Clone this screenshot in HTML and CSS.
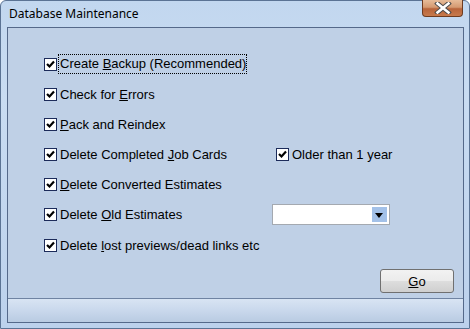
FILE: index.html
```html
<html>
<head>
<link rel="stylesheet" href="styles.css">
</head>
<body>
<div class="window">
    <div class="titlebar">
        <span class="title">Database Maintenance</span>
        <div class="close">
            <svg viewBox="0 0 24 12" width="24" height="12">
                <path d="M 6.5,1.5 L 17.5,10.5 M 17.5,1.5 L 6.5,10.5" stroke="#4a4a4a" stroke-width="4.6" stroke-linecap="square"/>
                <path d="M 6.5,1.5 L 17.5,10.5 M 17.5,1.5 L 6.5,10.5" stroke="#ffffff" stroke-width="2.6" stroke-linecap="square"/>
            </svg>
        </div>
    </div>
    <div class="client">
        <div class="content">
            <div class="options">
                <label class="opt focused"><span class="box"></span><span class="text">Create <u>B</u>ackup (Recommended)</span></label>
                <span></span>
                <label class="opt"><span class="box"></span><span class="text">Check for <u>E</u>rrors</span></label>
                <span></span>
                <label class="opt"><span class="box"></span><span class="text"><u>P</u>ack and Reindex</span></label>
                <span></span>
                <label class="opt"><span class="box"></span><span class="text">Delete Completed <u>J</u>ob Cards</span></label>
                <label class="opt side"><span class="box"></span><span class="text">Older than 1 year</span></label>
                <label class="opt"><span class="box"></span><span class="text"><u>D</u>elete Converted Estimates</span></label>
                <span></span>
                <label class="opt"><span class="box"></span><span class="text">Delete <u>O</u>ld Estimates</span></label>
                <div class="combo"><span class="combo-btn"></span></div>
                <label class="opt last"><span class="box"></span><span class="text">Delete <u>l</u>ost previews/dead links etc</span></label>
                <span></span>
            </div>
            <div class="actions">
                <button class="btn"><u>G</u>o</button>
            </div>
        </div>
        <div class="statusbar"></div>
    </div>
</div>
</body>
</html>
```

FILE: styles.css
```css
html, body {
    margin: 0;
    padding: 0;
    background: #ffffff;
}

.window {
    width: 470px;
    height: 329px;
    box-sizing: border-box;
    display: flex;
    flex-direction: column;
    background: linear-gradient(to bottom, #c2d7ef 0%, #c9dcf2 30%, #bcd1ec 100%);
    border: 1px solid #5b7394;
    border-radius: 6px 6px 0 0;
}

.titlebar {
    height: 26px;
    display: flex;
    justify-content: space-between;
    align-items: flex-start;
    padding-left: 8px;
}

.title {
    font-family: "Noto Sans", sans-serif;
    font-size: 12px;
    color: #000000;
    margin-top: 4px;
}

.close {
    width: 41px;
    height: 17px;
    margin-top: -1px;
    margin-right: 6px;
    box-sizing: border-box;
    border: 1px solid #6e3b1f;
    border-top: none;
    border-radius: 0 0 4px 4px;
    background: linear-gradient(to bottom, #e7bc99 0%, #d59a72 45%, #b8643a 55%, #c77a4c 100%);
    display: flex;
    align-items: center;
    justify-content: center;
}

.client {
    flex: 1;
    margin: 0 5px 5px 6px;
    border: 1px solid #55698a;
    background: #bfd0e6;
    display: flex;
    flex-direction: column;
}

.content {
    flex: 1;
    display: flex;
    flex-direction: column;
}

.options {
    display: grid;
    grid-template-columns: 228px auto;
    grid-auto-rows: 30px;
    align-items: center;
    padding: 21px 0 0 36px;
}

.opt {
    display: flex;
    align-items: center;
    font-family: "Liberation Sans", sans-serif;
    font-size: 13px;
    color: #000000;
    white-space: nowrap;
}

.opt.side {
    margin-left: 4px;
}

.opt.last {
    margin-top: 3px;
}

.box {
    width: 11px;
    height: 11px;
    border: 1px solid #1c2b5a;
    background: #ffffff url("data:image/svg+xml;utf8,<svg xmlns='http://www.w3.org/2000/svg' viewBox='0 0 11 11'><path d='M 2,5 L 4.5,7.5 L 9,2.5' fill='none' stroke='black' stroke-width='2.2'/></svg>") no-repeat center;
    margin-right: 1px;
    flex: none;
}

.text {
    padding: 1px 0 1px 1px;
    border: 1px dotted transparent;
}

.focused .text {
    border-color: #000000;
    padding: 1px 0 2px 1px;
}

.combo {
    width: 118px;
    height: 21px;
    box-sizing: border-box;
    border: 1px solid #a4a9b0;
    background: #ffffff;
    display: flex;
    justify-content: flex-end;
    padding: 2px;
    margin-top: 1px;
}

.combo-btn {
    width: 15px;
    background: #a3c1e8;
    position: relative;
}

.combo-btn::after {
    content: "";
    position: absolute;
    left: 3px;
    top: 6px;
    border-left: 4px solid transparent;
    border-right: 4px solid transparent;
    border-top: 5px solid #000000;
}

.actions {
    flex: 1;
    display: flex;
    justify-content: flex-end;
    align-items: flex-start;
    padding: 10px 9px 0 0;
}

.btn {
    width: 74px;
    height: 24px;
    font-family: "Liberation Sans", sans-serif;
    font-size: 13px;
    color: #000000;
    border: 1px solid #707070;
    border-radius: 3px;
    background: linear-gradient(to bottom, #f2f2f2 0%, #ebebeb 48%, #dddddd 52%, #cfcfcf 100%);
    padding: 0;
}

.statusbar {
    height: 23px;
    border-top: 1px solid #6f83a2;
    background: linear-gradient(to bottom, #d8e4f3 0%, #c9d8ec 50%, #b9cbe2 100%);
}
```
